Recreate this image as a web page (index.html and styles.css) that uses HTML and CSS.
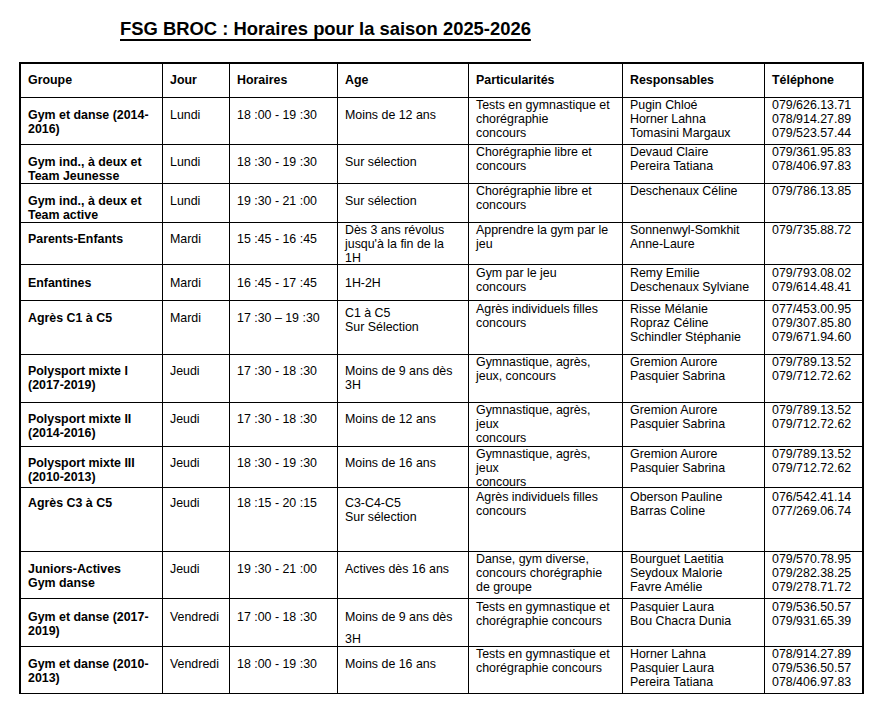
FILE: index.html
```html
<!DOCTYPE html>
<html lang="fr">
<head>
<meta charset="utf-8">
<title>FSG BROC : Horaires pour la saison 2025-2026</title>
<link rel="stylesheet" href="styles.css">
</head>
<body>
<h1 class="title">FSG BROC : Horaires pour la saison 2025-2026</h1>
<div class="schedule">
  <div class="cell head">Groupe</div>
  <div class="cell head">Jour</div>
  <div class="cell head">Horaires</div>
  <div class="cell head">Age</div>
  <div class="cell head">Particularités</div>
  <div class="cell head">Responsables</div>
  <div class="cell head">Téléphone</div>

  <div class="cell grp">Gym et danse (2014-<br>2016)</div>
  <div class="cell">Lundi</div>
  <div class="cell">18 :00 - 19 :30</div>
  <div class="cell">Moins de 12 ans</div>
  <div class="cell">Tests en gymnastique et<br>chorégraphie<br>concours</div>
  <div class="cell">Pugin Chloé<br>Horner Lahna<br>Tomasini Margaux</div>
  <div class="cell">079/626.13.71<br>078/914.27.89<br>079/523.57.44</div>

  <div class="cell grp">Gym ind., à deux et<br>Team Jeunesse</div>
  <div class="cell">Lundi</div>
  <div class="cell">18 :30 - 19 :30</div>
  <div class="cell">Sur sélection</div>
  <div class="cell">Chorégraphie libre et<br>concours</div>
  <div class="cell">Devaud Claire<br>Pereira Tatiana</div>
  <div class="cell">079/361.95.83<br>078/406.97.83</div>

  <div class="cell grp">Gym ind., à deux et<br>Team active</div>
  <div class="cell">Lundi</div>
  <div class="cell">19 :30 - 21 :00</div>
  <div class="cell">Sur sélection</div>
  <div class="cell">Chorégraphie libre et<br>concours</div>
  <div class="cell">Deschenaux Céline</div>
  <div class="cell">079/786.13.85</div>

  <div class="cell grp p9">Parents-Enfants</div>
  <div class="cell p9">Mardi</div>
  <div class="cell p9">15 :45 - 16 :45</div>
  <div class="cell p0">Dès 3 ans révolus<br>jusqu'à la fin de la<br>1H</div>
  <div class="cell">Apprendre la gym par le<br>jeu</div>
  <div class="cell">Sonnenwyl-Somkhit<br>Anne-Laure</div>
  <div class="cell">079/735.88.72</div>

  <div class="cell grp p11">Enfantines</div>
  <div class="cell p11">Mardi</div>
  <div class="cell p11">16 :45 - 17 :45</div>
  <div class="cell p11">1H-2H</div>
  <div class="cell p1">Gym par le jeu<br>concours</div>
  <div class="cell p1">Remy Emilie<br>Deschenaux Sylviane</div>
  <div class="cell p1">079/793.08.02<br>079/614.48.41</div>

  <div class="cell grp">Agrès C1 à C5</div>
  <div class="cell">Mardi</div>
  <div class="cell">17 :30 – 19 :30</div>
  <div class="cell p5">C1 à C5<br>Sur Sélection</div>
  <div class="cell p1">Agrès individuels filles<br>concours</div>
  <div class="cell p1">Risse Mélanie<br>Ropraz Céline<br>Schindler Stéphanie</div>
  <div class="cell p1">077/453.00.95<br>079/307.85.80<br>079/671.94.60</div>

  <div class="cell grp p9">Polysport mixte I<br>(2017-2019)</div>
  <div class="cell p9">Jeudi</div>
  <div class="cell p9">17 :30 - 18 :30</div>
  <div class="cell p9">Moins de 9 ans dès<br>3H</div>
  <div class="cell">Gymnastique, agrès,<br>jeux, concours</div>
  <div class="cell">Gremion Aurore<br>Pasquier Sabrina</div>
  <div class="cell">079/789.13.52<br>079/712.72.62</div>

  <div class="cell grp p9">Polysport mixte II<br>(2014-2016)</div>
  <div class="cell p9">Jeudi</div>
  <div class="cell p9">17 :30 - 18 :30</div>
  <div class="cell p9">Moins de 12 ans</div>
  <div class="cell">Gymnastique, agrès,<br>jeux<br>concours</div>
  <div class="cell">Gremion Aurore<br>Pasquier Sabrina</div>
  <div class="cell">079/789.13.52<br>079/712.72.62</div>

  <div class="cell grp p9">Polysport mixte III<br>(2010-2013)</div>
  <div class="cell p9">Jeudi</div>
  <div class="cell p9">18 :30 - 19 :30</div>
  <div class="cell p9">Moins de 16 ans</div>
  <div class="cell">Gymnastique, agrès,<br>jeux<br>concours</div>
  <div class="cell">Gremion Aurore<br>Pasquier Sabrina</div>
  <div class="cell">079/789.13.52<br>079/712.72.62</div>

  <div class="cell grp p8">Agrès C3 à C5</div>
  <div class="cell p8">Jeudi</div>
  <div class="cell p8">18 :15 - 20 :15</div>
  <div class="cell p8">C3-C4-C5<br>Sur sélection</div>
  <div class="cell p2">Agrès individuels filles<br>concours</div>
  <div class="cell p2">Oberson Pauline<br>Barras Coline</div>
  <div class="cell p2">076/542.41.14<br>077/269.06.74</div>

  <div class="cell grp">Juniors-Actives<br>Gym danse</div>
  <div class="cell">Jeudi</div>
  <div class="cell">19 :30 - 21 :00</div>
  <div class="cell">Actives dès 16 ans</div>
  <div class="cell">Danse, gym diverse,<br>concours chorégraphie<br>de groupe</div>
  <div class="cell">Bourguet Laetitia<br>Seydoux Malorie<br>Favre Amélie</div>
  <div class="cell">079/570.78.95<br>079/282.38.25<br>079/278.71.72</div>

  <div class="cell grp p11">Gym et danse (2017-<br>2019)</div>
  <div class="cell p11">Vendredi</div>
  <div class="cell p11">17 :00 - 18 :30</div>
  <div class="cell p11">Moins de 9 ans dès<div class="para">3H</div></div>
  <div class="cell p1">Tests en gymnastique et<br>chorégraphie concours</div>
  <div class="cell p1">Pasquier Laura<br>Bou Chacra Dunia</div>
  <div class="cell p1">079/536.50.57<br>079/931.65.39</div>

  <div class="cell grp">Gym et danse (2010-<br>2013)</div>
  <div class="cell">Vendredi</div>
  <div class="cell">18 :00 - 19 :30</div>
  <div class="cell">Moins de 16 ans</div>
  <div class="cell">Tests en gymnastique et<br>chorégraphie concours</div>
  <div class="cell">Horner Lahna<br>Pasquier Laura<br>Pereira Tatiana</div>
  <div class="cell">078/914.27.89<br>079/536.50.57<br>078/406.97.83</div>
</div>
</body>
</html>
```
FILE: styles.css
```css
html, body {
  margin: 0;
  padding: 0;
  background: #ffffff;
}

body {
  font-family: "Liberation Sans", Arial, sans-serif;
  color: #000000;
}

.title {
  margin: 18px 0 0 120px;
  font-size: 18.4px;
  line-height: 22px;
  height: 22px;
  font-weight: bold;
  text-decoration: underline;
  text-decoration-thickness: 1.5px;
  text-underline-offset: 4px;
  white-space: nowrap;
}

.schedule {
  display: grid;
  grid-template-columns: 142px 67px 108px 131px 154px 142px 97px;
  grid-template-rows: 34px 47px 39px 39px 42px 36px 54px 48px 44px 41px 64px 47px 48px 47px;
  width: max-content;
  margin: 22px 0 0 19px;
  border-top: 2px solid #000;
  border-left: 2px solid #000;
  border-right: 2px solid #000;
}

.cell {
  box-sizing: border-box;
  border-right: 1px solid #000;
  border-bottom: 1px solid #000;
  padding: 0 2px 0 7px;
  font-size: 12.4px;
  line-height: 14px;
  white-space: nowrap;
  overflow: visible;
  min-height: 0;
}

.cell:nth-child(7n) {
  border-right: none;
}

.cell:nth-child(7n+1),
.cell:nth-child(7n+2),
.cell:nth-child(7n+3),
.cell:nth-child(7n+4) {
  padding-top: 10px;
}

.cell.head {
  padding-top: 9px;
  font-weight: bold;
}

.cell.grp {
  font-weight: bold;
}

.cell.p0 { padding-top: 0; }
.cell.p1 { padding-top: 1px; }
.cell.p2 { padding-top: 2px; }
.cell.p5 { padding-top: 5px; }
.cell.p8 { padding-top: 8px; }
.cell.p9 { padding-top: 9px; }
.cell.p11 { padding-top: 11px; }

.para {
  margin-top: 8px;
}
```
